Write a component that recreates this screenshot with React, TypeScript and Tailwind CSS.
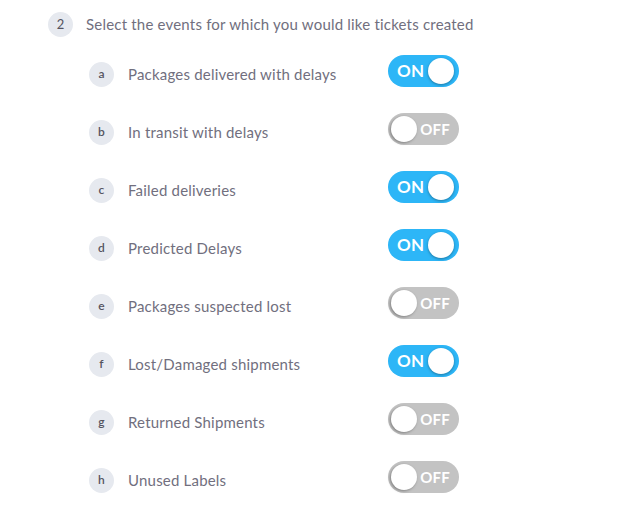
type EventRow = {
    letter: string;
    label: string;
    on: boolean;
}

const events: EventRow[] = [
    { letter: "a", label: "Packages delivered with delays", on: true },
    { letter: "b", label: "In transit with delays", on: false },
    { letter: "c", label: "Failed deliveries", on: true },
    { letter: "d", label: "Predicted Delays", on: true },
    { letter: "e", label: "Packages suspected lost", on: false },
    { letter: "f", label: "Lost/Damaged shipments", on: true },
    { letter: "g", label: "Returned Shipments", on: false },
    { letter: "h", label: "Unused Labels", on: false },
]

function Toggle({ on }: { on: boolean }) {
    if (on) {
        return (
            <div className="-mt-[6px] flex h-[32px] w-[71px] items-center justify-between rounded-full bg-[#2db6f7] pl-[9px] pr-[5px]">
                <span className="text-[17px] font-bold text-white">ON</span>
                <span className="h-[26px] w-[26px] rounded-full bg-white shadow-[0_1px_3px_rgba(0,0,0,0.35)]" />
            </div>
        )
    }
    return (
        <div className="-mt-[6px] flex h-[32px] w-[71px] items-center rounded-full bg-[#c3c3c3] pl-[3px] pr-[9px]">
            <span className="h-[26px] w-[26px] rounded-full bg-white shadow-[-1px_1px_3px_rgba(0,0,0,0.35)]" />
            <span className="ml-auto text-[15px] font-bold text-white">OFF</span>
        </div>
    )
}

export default function App() {
    return (
        <main className="min-h-screen bg-white pl-[48px] pt-[12px] font-['Lato',sans-serif] tracking-[0.2px] text-[#716f7e]">
            <div className="flex items-center gap-[13px]">
                <span className="flex h-[25px] w-[25px] items-center justify-center rounded-full bg-[#e6e9ef] text-[13px] text-[#55545f]">2</span>
                <h2 className="text-[15px]">Select the events for which you would like tickets created</h2>
            </div>
            <ul className="mt-[21px] flex flex-col gap-[26px] pl-[41px]">
                {events.map((e) => (
                    <li key={e.letter} className="flex h-[32px] items-center">
                        <span className="flex h-[25px] w-[25px] items-center justify-center rounded-full bg-[#e6e9ef] text-[12px] font-semibold text-[#55545f]">{e.letter}</span>
                        <span className="ml-[14px] w-[260px] text-[15px]">{e.label}</span>
                        <Toggle on={e.on} />
                    </li>
                ))}
            </ul>
        </main>
    )
}
